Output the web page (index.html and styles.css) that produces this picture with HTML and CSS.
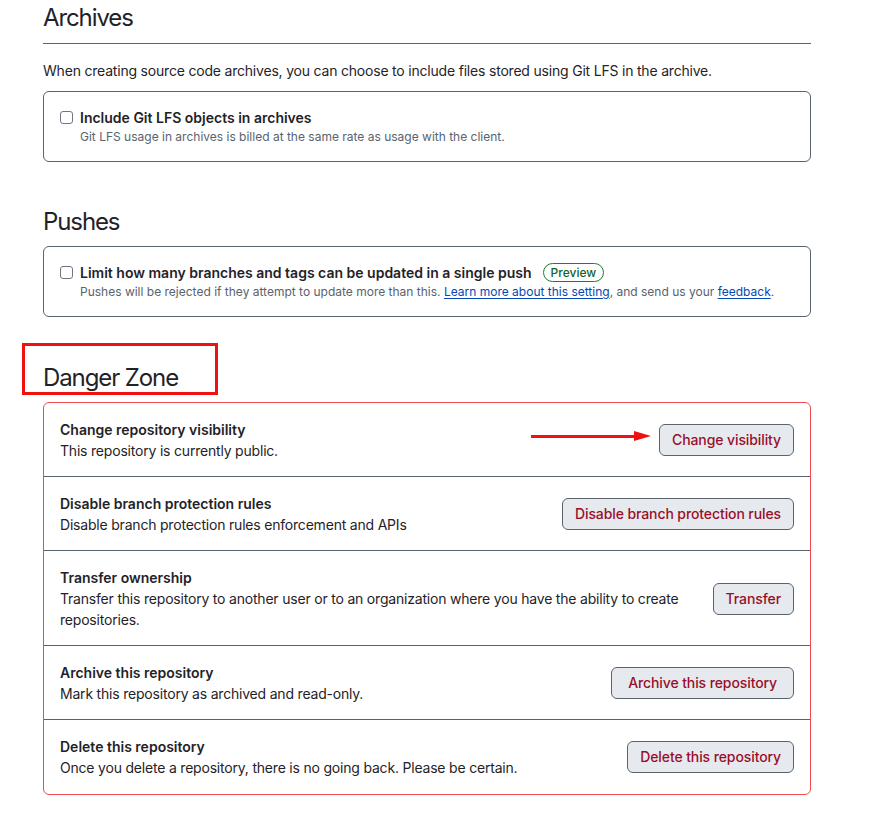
FILE: index.html
```html
<!DOCTYPE html>
<html lang="en">
<head>
<meta charset="utf-8">
<title>Settings</title>
<link rel="stylesheet" href="styles.css">
</head>
<body>
<div class="page">
  <section class="section first">
    <h2 class="subhead subhead-border">Archives</h2>
    <p class="intro">When creating source code archives, you can choose to include files stored using Git LFS in the archive.</p>
    <div class="box">
      <div class="check-row">
        <span class="checkbox"></span>
        <span class="check-label">Include Git LFS objects in archives</span>
      </div>
      <p class="check-note">Git LFS usage in archives is billed at the same rate as usage with the client.</p>
    </div>
  </section>

  <section class="section">
    <h2 class="subhead">Pushes</h2>
    <div class="box">
      <div class="check-row">
        <span class="checkbox"></span>
        <span class="check-label">Limit how many branches and tags can be updated in a single push</span>
        <span class="badge">Preview</span>
      </div>
      <p class="check-note">Pushes will be rejected if they attempt to update more than this. <a href="#" class="link">Learn more about this setting</a>, and send us your <a href="#" class="link">feedback</a>.</p>
    </div>
  </section>

  <section class="section danger-section">
    <div class="danger-head">
      <h2 class="subhead">Danger Zone</h2>
      <span class="annotation-box"></span>
    </div>
    <div class="danger-box">
      <div class="danger-row">
        <div class="danger-text">
          <div class="danger-title">Change repository visibility</div>
          <div class="danger-desc">This repository is currently public.</div>
        </div>
        <button class="btn-danger">Change visibility</button>
        <span class="annotation-arrow"><span class="arrow-line"></span><span class="arrow-head"></span></span>
      </div>
      <div class="danger-row">
        <div class="danger-text">
          <div class="danger-title">Disable branch protection rules</div>
          <div class="danger-desc">Disable branch protection rules enforcement and APIs</div>
        </div>
        <button class="btn-danger">Disable branch protection rules</button>
      </div>
      <div class="danger-row">
        <div class="danger-text">
          <div class="danger-title">Transfer ownership</div>
          <div class="danger-desc">Transfer this repository to another user or to an organization where you have the ability to create repositories.</div>
        </div>
        <button class="btn-danger">Transfer</button>
      </div>
      <div class="danger-row">
        <div class="danger-text">
          <div class="danger-title">Archive this repository</div>
          <div class="danger-desc">Mark this repository as archived and read-only.</div>
        </div>
        <button class="btn-danger btn-wide">Archive this repository</button>
      </div>
      <div class="danger-row">
        <div class="danger-text">
          <div class="danger-title">Delete this repository</div>
          <div class="danger-desc">Once you delete a repository, there is no going back. Please be certain.</div>
        </div>
        <button class="btn-danger">Delete this repository</button>
      </div>
    </div>
  </section>
</div>
</body>
</html>
```

FILE: styles.css
```css
* { box-sizing: border-box; }

body {
  margin: 0;
  background: #ffffff;
  color: #1f2328;
  font-family: Inter, "Noto Sans", "Liberation Sans", sans-serif;
  font-size: 14px;
  line-height: 1.5;
}

.page {
  width: 811px;
  padding-left: 43px;
}

.section { margin-top: 42px; }
.section.first { margin-top: 0; }
.section.danger-section { margin-top: 43px; }

.subhead {
  margin: 0;
  font-size: 24px;
  font-weight: 400;
  letter-spacing: -1.1px;
  line-height: 36px;
  padding-bottom: 6px;
  color: #1f2328;
}

.subhead-border {
  padding-bottom: 7px;
  border-bottom: 1px solid #59636e;
}

.intro {
  margin: 16px 0 10px;
  line-height: 21px;
  letter-spacing: -0.2px;
}

.box {
  border: 1px solid #59636e;
  border-radius: 6px;
  padding: 15px 16px 15px;
}

.check-row {
  display: flex;
  align-items: center;
  height: 21px;
}

.checkbox {
  width: 13px;
  height: 13px;
  border: 1px solid #6e7781;
  border-radius: 3px;
  margin-right: 7px;
  flex: none;
}

.check-label {
  font-weight: 600;
  font-size: 14px;
}

.badge {
  margin-left: 11px;
  display: inline-flex;
  align-items: center;
  height: 19px;
  padding: 0 7px;
  border: 1px solid #1a7f37;
  border-radius: 999px;
  color: #116329;
  font-size: 12px;
  font-weight: 500;
  line-height: 1;
}

.check-note {
  margin: 0 0 0 20px;
  font-size: 12px;
  line-height: 18px;
  color: #59636e;
}

.link {
  color: #0349b4;
  text-decoration: underline;
  text-underline-offset: 2px;
}

.danger-head {
  position: relative;
}

.annotation-box {
  position: absolute;
  left: -21px;
  top: -17px;
  width: 196px;
  height: 52px;
  border: 3px solid #f01010;
}

.danger-box {
  border: 1px solid #f24a50;
  border-radius: 6px;
}

.danger-row {
  position: relative;
  display: flex;
  align-items: center;
  gap: 16px;
  padding: 16px 16px 15px;
  border-top: 1px solid #59636e;
}

.danger-row:first-child { border-top: 0; }
.danger-row:last-child { padding-bottom: 16px; }

.danger-text { flex: 1; }

.danger-title {
  font-weight: 600;
  line-height: 21px;
}

.danger-desc {
  line-height: 21px;
  letter-spacing: -0.2px;
}

.btn-danger {
  flex: none;
  height: 32px;
  padding: 0 12px;
  border: 1px solid #59636e;
  border-radius: 6px;
  background: #e6eaef;
  color: #990f2a;
  font-family: inherit;
  font-size: 14px;
  font-weight: 500;
  line-height: 20px;
  letter-spacing: -0.1px;
}

.btn-wide {
  padding: 0 16px;
}

.annotation-arrow {
  position: absolute;
  left: 487px;
  top: 27px;
  width: 120px;
  height: 12px;
  display: flex;
  align-items: center;
}

.arrow-line {
  width: 104px;
  height: 3px;
  background: #f01010;
}

.arrow-head {
  width: 0;
  height: 0;
  border-top: 5px solid transparent;
  border-bottom: 5px solid transparent;
  border-left: 17px solid #f01010;
}
```
